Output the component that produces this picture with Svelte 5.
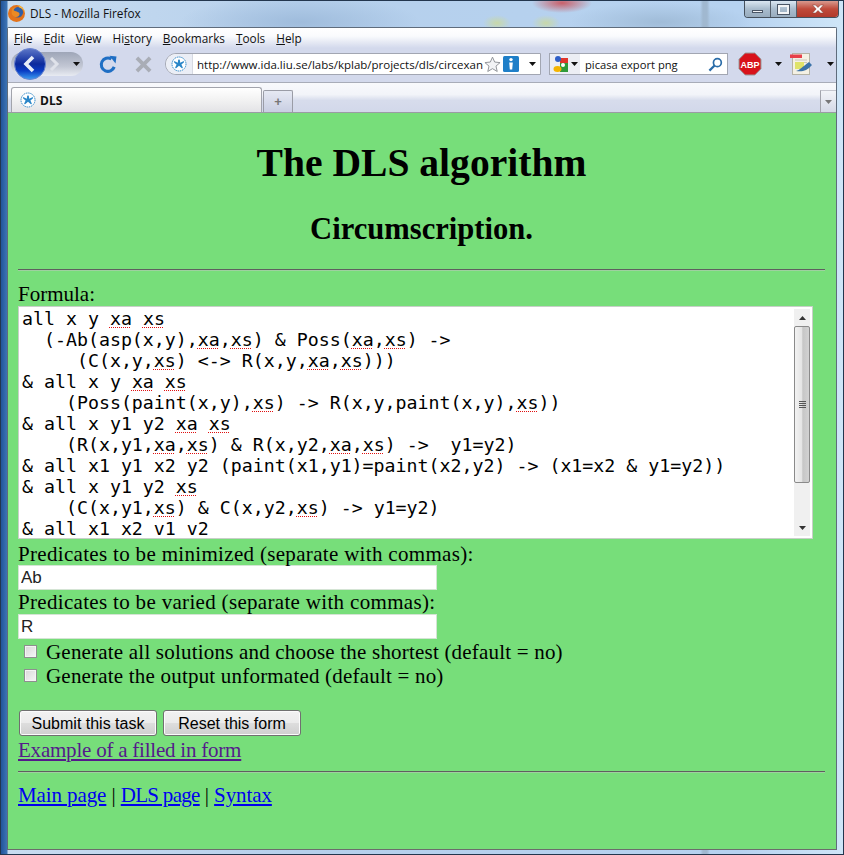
<script>
	const menus = [
		['F', 'ile'],
		['E', 'dit'],
		['V', 'iew'],
		['Hi', 's', 'tory'],
		['B', 'ookmarks'],
		['T', 'ools'],
		['H', 'elp']
	];

	// each line is split in parts; odd parts get the spell check underline
	const formula = [
		['all x y ', 'xa', ' ', 'xs'],
		['  (-Ab(asp(x,y),', 'xa', ',', 'xs', ') & Poss(', 'xa', ',', 'xs', ') ->'],
		['     (C(x,y,', 'xs', ') <-> R(x,y,', 'xa', ',', 'xs', ')))'],
		['& all x y ', 'xa', ' ', 'xs'],
		['    (Poss(paint(x,y),', 'xs', ') -> R(x,y,paint(x,y),', 'xs', '))'],
		['& all x y1 y2 ', 'xa', ' ', 'xs'],
		['    (R(x,y1,', 'xa', ',', 'xs', ') & R(x,y2,', 'xa', ',', 'xs', ') ->  y1=y2)'],
		['& all x1 y1 x2 y2 (paint(x1,y1)=paint(x2,y2) -> (x1=x2 & y1=y2))'],
		['& all x y1 y2 ', 'xs'],
		['    (C(x,y1,', 'xs', ') & C(x,y2,', 'xs', ') -> y1=y2)'],
		['& all x1 x2 v1 v2']
	];
</script>

{#snippet favicon()}
	<svg class="favicon" viewBox="0 0 16 16" width="16" height="16">
		<circle cx="8" cy="8" r="7" fill="#fff" stroke="#2a86c8" stroke-width="1" stroke-dasharray="1.4 0.8" />
		<path d="M8 3.4C8.8 3.4 9 4 9 5L9.2 6.8 12.4 5.2C13.2 5 13.4 5.8 12.8 6.4L10.4 8.4 11.8 11.4C12 12.2 11.2 12.4 10.6 12L8 9.8 5.4 12C4.8 12.4 4 12.2 4.2 11.4L5.6 8.4 3.2 6.4C2.6 5.8 2.8 5 3.6 5.2L6.8 6.8 7 5C7 4 7.2 3.4 8 3.4Z" fill="#2a86c8" />
	</svg>
{/snippet}

{#snippet dropArrow()}
	<svg class="drop" viewBox="0 0 7 4" width="7" height="4"><path d="M0 0H7L3.5 4Z" fill="#111" /></svg>
{/snippet}

<div class="window">
	<header class="titlebar">
		<svg class="fox" viewBox="0 0 16 16" width="17" height="17">
			<circle cx="8" cy="8" r="8" fill="#e2731c" />
			<circle cx="9.2" cy="6.8" r="5" fill="#2f5fa8" />
			<path d="M4 3.6C5 2.4 6.6 2 8 2.4 6.4 2.8 5.4 3.8 5.4 5 6.6 6.4 10 6 10.8 8 11.2 10.4 8.8 12 6.4 11.2 4.4 10.6 3.2 8.6 3.4 6.4 3.5 5.4 3.7 4.4 4 3.6Z" fill="#ea8a24" />
			<path d="M9 .3C12.4.9 15.4 3.6 15.8 7 14.8 4.8 13 3 10.8 2.4 10.6 1.6 9.8.8 9 .3Z" fill="#f8c040" />
		</svg>
		<span class="title">DLS - Mozilla Firefox</span>
		<div class="caption-buttons">
			<span class="cap min"><i></i></span>
			<span class="cap max"><i></i></span>
			<span class="cap close">
				<svg viewBox="0 0 14 10" width="14" height="10"><path d="M1.5 1H4.5L7 3.5 9.5 1H12.5L8.8 5 12.5 9H9.5L7 6.5 4.5 9H1.5L5.2 5Z" fill="#fff" stroke="#7a3a30" stroke-width=".5" /></svg>
			</span>
		</div>
	</header>

	<div class="browser">
		<nav class="menubar">
			{#each menus as m}
				<span class="menu">
					{#if m.length === 3}{m[0]}<u>{m[1]}</u>{m[2]}{:else}<u>{m[0]}</u>{m[1]}{/if}
				</span>
			{/each}
		</nav>

		<div class="navbar">
			<div class="backfwd">
				<span class="back">
					<svg viewBox="0 0 32 32" width="32" height="32">
						<defs>
							<linearGradient id="backfill" x1="0" y1="0" x2="0" y2="1">
								<stop offset="0" stop-color="#5d77c8" />
								<stop offset=".5" stop-color="#0c2a9c" />
								<stop offset=".72" stop-color="#0a3cc4" />
								<stop offset="1" stop-color="#3fa0f0" />
							</linearGradient>
						</defs>
						<circle cx="16" cy="16" r="15.5" fill="url(#backfill)" stroke="#6a84d0" />
						<path d="M19 9 12 16 19 23" fill="none" stroke="#e8eef8" stroke-width="3.6" />
					</svg>
				</span>
				<svg class="fwd" viewBox="0 0 12 14" width="12" height="14"><path d="M3 1 9 7 3 13" fill="none" stroke="#dfe2ea" stroke-width="3" /></svg>
				{@render dropArrow()}
			</div>
			<svg class="reload" viewBox="0 0 20 20" width="19" height="19">
				<path d="M16 12.5A7 7 0 1 1 13 4.2" fill="none" stroke="#1f6fc4" stroke-width="3.2" />
				<path d="M11 .8 18.4 1.6 17.4 9Z" fill="#1f6fc4" />
			</svg>
			<svg class="stop" viewBox="0 0 18 18" width="17" height="17"><path d="M2 2 16 16M16 2 2 16" stroke="#a9adb6" stroke-width="4" /></svg>

			<div class="urlbar">
				<span class="site">{@render favicon()}</span>
				<span class="url">http://www.ida.liu.se/labs/kplab/projects/dls/circexan</span>
				<svg class="star" viewBox="0 0 18 18" width="17" height="17"><path d="M9 1.2 11.3 6.4 17 7 12.7 10.7 14 16.4 9 13.4 4 16.4 5.3 10.7 1 7 6.7 6.4Z" fill="#f2f3f5" stroke="#8d9096" /></svg>
				<span class="info"><svg viewBox="0 0 16 16" width="16" height="16"><rect width="16" height="16" rx="1.5" fill="#1f7fc8" /><circle cx="8" cy="3.6" r="1.7" fill="#fff" /><path d="M6.2 6.4H9.8L9.2 13.6H6.8Z" fill="#fff" /></svg></span>
				<span class="urldrop">{@render dropArrow()}</span>
			</div>

			<div class="searchbar">
				<span class="engine">
					<svg viewBox="0 0 16 18" width="16" height="18">
						<rect x="7" y="3" width="8" height="6" fill="#e0352b" />
						<rect x="7" y="8" width="8" height="9" fill="#2f9a3a" />
						<circle cx="5" cy="4" r="3" fill="#2f5fc8" />
						<ellipse cx="4.5" cy="14" rx="4" ry="3" fill="#f4b400" />
						<circle cx="10" cy="10" r="2" fill="#fff" />
					</svg>
					{@render dropArrow()}
				</span>
				<span class="query">picasa export png</span>
				<svg class="mag" viewBox="0 0 16 16" width="15" height="15"><circle cx="10" cy="6" r="4.2" fill="none" stroke="#2a6ca8" stroke-width="1.8" /><path d="M7 9 1.5 14.5" stroke="#2a6ca8" stroke-width="2.4" /></svg>
			</div>

			<svg class="abp" viewBox="0 0 24 24" width="24" height="24">
				<path d="M7.2 1H16.8L23 7.2V16.8L16.8 23H7.2L1 16.8V7.2Z" fill="#d8121a" stroke="#9a9a9a" />
				<text x="12" y="15.6" text-anchor="middle" class="abp-text">ABP</text>
			</svg>
			<span class="tooldrop abpdrop">{@render dropArrow()}</span>
			<svg class="notes" viewBox="0 0 24 24" width="24" height="24">
				<rect x="3.5" y="1.5" width="17" height="21" fill="#f4f1e4" stroke="#b5b3a6" />
				<rect x="1" y="2.5" width="12" height="3.5" fill="#e8404a" />
				<path d="M6 8H18M6 10.5H18M6 13H12M6 15.5H12" stroke="#c8c8bc" />
				<rect x="6" y="10" width="9" height="7" fill="#dfe36a" />
				<path d="M7 19C11 18 13 15 20 10L23 13C18 19 13 20 7 19Z" fill="#3b73a8" />
			</svg>
			<span class="tooldrop lastdrop">{@render dropArrow()}</span>
		</div>

		<div class="tabbar">
			<div class="tab">
				{@render favicon()}
				<b>DLS</b>
			</div>
			<div class="newtab">+</div>
			<div class="tabspacer"></div>
			<div class="tablist"><svg viewBox="0 0 7 4" width="7" height="4"><path d="M0 0H7L3.5 4Z" fill="#777" /></svg></div>
		</div>

		<main class="page">
			<h1>The DLS algorithm</h1>
			<h2>Circumscription.</h2>
			<hr class="first" />
			<div class="label formula-label">Formula:</div>
			<div class="textarea">
				<div class="formula">
					{#each formula as line}
						<div class="line">{#each line as part, i}{#if i % 2}<span class="typo">{part}</span>{:else}{part}{/if}{/each}</div>
					{/each}
				</div>
				<div class="scrollbar">
					<span class="sb-btn"><svg viewBox="0 0 7 4" width="7" height="4"><path d="M0 4H7L3.5 0Z" fill="#333" /></svg></span>
					<span class="sb-thumb"><i></i><i></i><i></i><i></i></span>
					<span class="sb-rest"></span>
					<span class="sb-btn"><svg viewBox="0 0 7 4" width="7" height="4"><path d="M0 0H7L3.5 4Z" fill="#333" /></svg></span>
				</div>
			</div>

			<div class="label field-label first-field">Predicates to be minimized (separate with commas):</div>
			<input class="field" type="text" value="Ab" />
			<div class="label field-label">Predicates to be varied (separate with commas):</div>
			<input class="field" type="text" value="R" />

			<div class="check first-check"><span class="box"></span>Generate all solutions and choose the shortest (default = no)</div>
			<div class="check"><span class="box"></span>Generate the output unformated (default = no)</div>

			<div class="buttons">
				<span class="btn">Submit this task</span>
				<span class="btn">Reset this form</span>
			</div>
			<div class="label example"><a class="visited" href="#example">Example of a filled in form</a></div>
			<hr class="second" />
			<div class="label footer-links">
				<a href="#main">Main page</a> | <a class="dls-link" href="#dls">DLS page</a> | <a href="#syntax">Syntax</a>
			</div>
		</main>
	</div>
</div>

<style>
	:global(body) {
		margin: 0;
	}

	.window {
		width: 844px;
		height: 855px;
		box-sizing: border-box;
		padding: 0 7px 5px 7px;
		display: flex;
		flex-direction: column;
		overflow: hidden;
		background:
			radial-gradient(ellipse 30px 10px at 562px 3px, #c9606a, transparent),
			radial-gradient(ellipse 14px 8px at 497px 23px, #c8d8a8, transparent),
			radial-gradient(ellipse 14px 8px at 546px 23px, #c8d8a8, transparent),
			linear-gradient(90deg, transparent 700px, #a0b8d0 703px, #a0b8d0 707px, transparent 710px),
			radial-gradient(ellipse 120px 26px at 300px 22px, #9fbcdc, transparent),
			radial-gradient(ellipse 90px 20px at 660px 22px, #a0bcd8, transparent),
			linear-gradient(90deg, #1d4f96 0, #3d74b4 7px, #c8dcf0 8px, #b6d0ec 300px, #b6d2f0 740px, #cfe6f8 100%);
		box-shadow: inset 0 0 0 1px #23364e;
	}

	.titlebar {
		height: 27px;
		flex: none;
		display: flex;
		align-items: center;
		padding-left: 1px;
		font: 12px "Open Sans", "Noto Sans", sans-serif;
		color: #111;
	}

	.fox {
		margin-bottom: 1px;
	}

	.title {
		margin-left: 5px;
		margin-bottom: 1px;
		font-size: 11.8px;
	}

	.caption-buttons {
		margin-left: auto;
		margin-right: -2px;
		align-self: flex-start;
		margin-top: 1px;
		display: flex;
		height: 16px;
		border: 1px solid #45505c;
		border-top: none;
		border-radius: 0 0 4px 4px;
		overflow: hidden;
	}

	.cap {
		display: flex;
		align-items: center;
		justify-content: center;
		background: linear-gradient(#dbe7f2, #a9bccd 50%, #98acbe);
		border-right: 1px solid #55606c;
	}

	.min {
		width: 25px;
	}

	.min i {
		width: 11px;
		height: 3px;
		margin-top: 5px;
		background: #f2f4f6;
		border: 1px solid #4a5666;
		box-sizing: border-box;
	}

	.max {
		width: 25px;
	}

	.max i {
		width: 11px;
		height: 9px;
		box-sizing: border-box;
		border: 2px solid #f2f4f6;
		outline: 1px solid #4a5666;
	}

	.close {
		width: 41px;
		border-right: none;
		background: linear-gradient(#d99a8e, #c04a3a 50%, #b13a2c);
	}

	.browser {
		flex: 1;
		min-height: 0;
		display: flex;
		flex-direction: column;
		border: 1px solid #5f6c7c;
		border-bottom-color: #6c6c6c;
		border-radius: 2px 2px 0 0;
		background: #d3d9ec;
	}

	.menubar {
		height: 20px;
		flex: none;
		display: flex;
		align-items: center;
		gap: 11px;
		padding-left: 6px;
		background: linear-gradient(#fff 0, #fafbfd 40%, #d3d9ec 100%);
		font: 11.8px "Open Sans", "Noto Sans", sans-serif;
		color: #111;
	}

	.navbar {
		height: 34px;
		flex: none;
		display: flex;
		align-items: center;
		background: #d3d9ec;
		font: 12px "Open Sans", "Noto Sans", sans-serif;
		color: #111;
		border-bottom: 1px solid #a8acb8;
	}

	.backfwd {
		width: 72px;
		height: 24px;
		margin: -2px 0 0 3px;
		flex: none;
		position: relative;
		display: flex;
		align-items: center;
		box-sizing: border-box;
		padding-left: 37px;
		border-radius: 12px;
		background: linear-gradient(#9ea6b8, #c2c7d4 60%, #e8ebf2);
	}

	.back {
		position: absolute;
		left: 3px;
		top: -4px;
		width: 32px;
		height: 32px;
	}

	.fwd {
		margin-right: 13px;
	}

	.reload {
		margin: -2px 0 0 16px;
		flex: none;
	}

	.stop {
		margin: -2px 0 0 17px;
		flex: none;
	}

	.urlbar {
		width: 376px;
		height: 22px;
		margin: -2px 0 0 13px;
		flex: none;
		display: flex;
		align-items: center;
		box-sizing: border-box;
		background: #fff;
		border: 1px solid #a2a6b2;
		border-radius: 11px 0 0 11px;
	}

	.site {
		width: 27px;
		height: 20px;
		flex: none;
		display: flex;
		align-items: center;
		justify-content: center;
		background: #ebeef6;
		border-radius: 10px 0 0 10px;
		border-right: 1px solid #d6d9e2;
		box-sizing: border-box;
	}

	.favicon {
		flex: none;
	}

	.url {
		margin-left: 4px;
		white-space: nowrap;
		flex: none;
		font-size: 11.5px;
	}

	.star {
		flex: none;
		margin-left: auto;
	}

	.info {
		display: flex;
		margin-left: 2px;
	}

	.urldrop {
		display: flex;
		margin: 0 4px 0 10px;
	}

	.drop {
		flex: none;
	}

	.searchbar {
		width: 179px;
		height: 22px;
		margin: -2px 0 0 8px;
		flex: none;
		display: flex;
		align-items: center;
		box-sizing: border-box;
		background: #fff;
		border: 1px solid #a2a6b2;
	}

	.engine {
		width: 30px;
		height: 20px;
		flex: none;
		display: flex;
		align-items: center;
		gap: 2px;
		box-sizing: border-box;
		padding-left: 3px;
		background: #eceef4;
	}

	.query {
		margin-left: 5px;
		font-size: 11.2px;
		white-space: nowrap;
	}

	.mag {
		margin-left: auto;
		margin-right: 4px;
	}

	.abp {
		margin: -2px 0 0 10px;
		flex: none;
	}

	.abp-text {
		font: bold 9px "Liberation Sans", sans-serif;
		fill: #fff;
	}

	.tooldrop {
		display: flex;
		margin-top: -2px;
	}

	.abpdrop {
		margin-left: 13px;
		margin-right: 7px;
	}

	.lastdrop {
		margin-left: 14px;
	}

	.notes {
		margin-top: -2px;
		flex: none;
	}

	.tabbar {
		height: 29px;
		flex: none;
		display: flex;
		align-items: flex-end;
		font: 12px "Open Sans", "Noto Sans", sans-serif;
		background: linear-gradient(#f8f9fc, #f2f4f9 40%, #d7dcec 60%, #d2d8ea);
		border-bottom: 1px solid #9a9ca4;
	}

	.tab {
		width: 251px;
		height: 25px;
		margin-left: 3px;
		box-sizing: border-box;
		display: flex;
		align-items: center;
		gap: 4px;
		padding-left: 8px;
		border: 1px solid #a2a4ac;
		border-bottom: none;
		border-radius: 3px 3px 0 0;
		background: linear-gradient(#fff, #f2f2f2 50%, #e3e3e6);
		color: #111;
	}

	.tab b {
		font-size: 12px;
	}

	.newtab {
		width: 30px;
		height: 22px;
		margin-left: 1px;
		box-sizing: border-box;
		display: flex;
		align-items: center;
		justify-content: center;
		border: 1px solid #9a9ca6;
		border-bottom: none;
		border-radius: 2px 2px 0 0;
		background: linear-gradient(#e6e9f3, #c8cee2);
		color: #777;
		font: bold 13px "Liberation Sans", sans-serif;
	}

	.tabspacer {
		flex: 1;
	}

	.tablist {
		width: 16px;
		height: 22px;
		box-sizing: border-box;
		display: flex;
		align-items: center;
		justify-content: center;
		border-left: 1px solid #a2a4ac;
		border-top: 1px solid #c4c6ce;
		background: linear-gradient(#f2f4f8, #d4d9e6);
	}

	.page {
		flex: 1;
		min-height: 0;
		overflow: hidden;
		box-sizing: border-box;
		padding: 0 11px 0 10px;
		background: #77de7a;
		color: #000;
		font-family: "Liberation Serif", serif;
		font-size: 21px;
	}

	h1 {
		margin: 27px 0 0;
		height: 46px;
		line-height: 46px;
		font-size: 39.6px;
		text-align: center;
		font-weight: bold;
	}

	h2 {
		margin: 27px 0 0;
		height: 32px;
		line-height: 32px;
		font-size: 30.6px;
		text-align: center;
		font-weight: bold;
	}

	hr {
		margin: 0;
		height: 0;
		border: none;
		border-top: 1px solid #5f5f5f;
		border-bottom: 1px solid #9fd0a0;
	}

	.first {
		margin-top: 24px;
	}

	.second {
		margin-top: 9px;
	}

	.label {
		height: 24px;
		line-height: 24px;
		white-space: nowrap;
	}

	.field-label {
		letter-spacing: 0.32px;
	}

	.first-field {
		height: 26px;
		padding-top: 5px;
		line-height: 21px;
		box-sizing: border-box;
	}

	.formula-label {
		margin-top: 11px;
	}

	.textarea {
		width: 795px;
		height: 233px;
		box-sizing: border-box;
		border: 1px solid #c8cfc8;
		background: #fff;
		display: flex;
		overflow: hidden;
	}

	.formula {
		flex: 1;
		padding: 1px 0 0 3px;
		font-family: "DejaVu Sans Mono", monospace;
		font-size: 18.25px;
		line-height: 21px;
		white-space: pre;
		overflow: hidden;
	}

	.line {
		height: 21px;
	}

	.typo {
		text-decoration: underline dotted #e01010;
		text-decoration-thickness: 1px;
		text-underline-offset: 2px;
	}

	.scrollbar {
		width: 16px;
		flex: none;
		display: flex;
		flex-direction: column;
		background: #f0f0f0;
		margin: 2px 2px 2px 0;
	}

	.sb-btn {
		height: 17px;
		flex: none;
		display: flex;
		align-items: center;
		justify-content: center;
	}

	.sb-thumb {
		height: 157px;
		flex: none;
		box-sizing: border-box;
		display: flex;
		flex-direction: column;
		align-items: center;
		justify-content: center;
		gap: 1px;
		border: 1px solid #8a8a8a;
		border-radius: 2px;
		background: linear-gradient(90deg, #f2f2f2, #e4e4e4 50%, #c6c6c6 55%, #d2d2d2);
	}

	.sb-thumb i {
		width: 7px;
		height: 1px;
		background: #555;
	}

	.sb-rest {
		flex: 1;
	}

	.field {
		display: block;
		width: 419px;
		height: 25px;
		margin: 0;
		padding: 0 2px;
		box-sizing: border-box;
		border: 1px solid #d4e4d4;
		background: #fff;
		font: 17px "Liberation Sans", sans-serif;
		color: #222;
		outline: none;
	}

	.check {
		height: 24px;
		line-height: 24px;
		display: flex;
		align-items: center;
		white-space: nowrap;
		letter-spacing: 0.2px;
	}

	.first-check {
		margin-top: 1px;
	}

	.box {
		width: 13px;
		height: 13px;
		box-sizing: border-box;
		margin: 0 9px 2px 6px;
		flex: none;
		border: 1px solid #8e8f8f;
		background: linear-gradient(135deg, #d8d8d8, #f6f6f6);
		box-shadow: inset 0 0 0 1px #f4f4f4;
	}

	.buttons {
		display: flex;
		gap: 6px;
		margin: 22px 0 0 1px;
	}

	.btn {
		width: 138px;
		height: 26px;
		padding-top: 1px;
		box-sizing: border-box;
		display: flex;
		align-items: center;
		justify-content: center;
		border: 1px solid #707070;
		border-radius: 3px;
		background: linear-gradient(#f2f2f2, #ebebeb 48%, #dddddd 52%, #cfcfcf);
		box-shadow: inset 0 0 0 1px #fbfbfb;
		font: 16px "Liberation Sans", sans-serif;
		color: #000;
	}

	a {
		color: #0000ee;
	}

	a.visited {
		color: #551a8b;
	}

	.example {
		margin-top: 2px;
		letter-spacing: -0.22px;
	}

	.footer-links {
		margin-top: 10px;
		letter-spacing: -0.1px;
	}

	.dls-link {
		letter-spacing: -0.7px;
	}
</style>
